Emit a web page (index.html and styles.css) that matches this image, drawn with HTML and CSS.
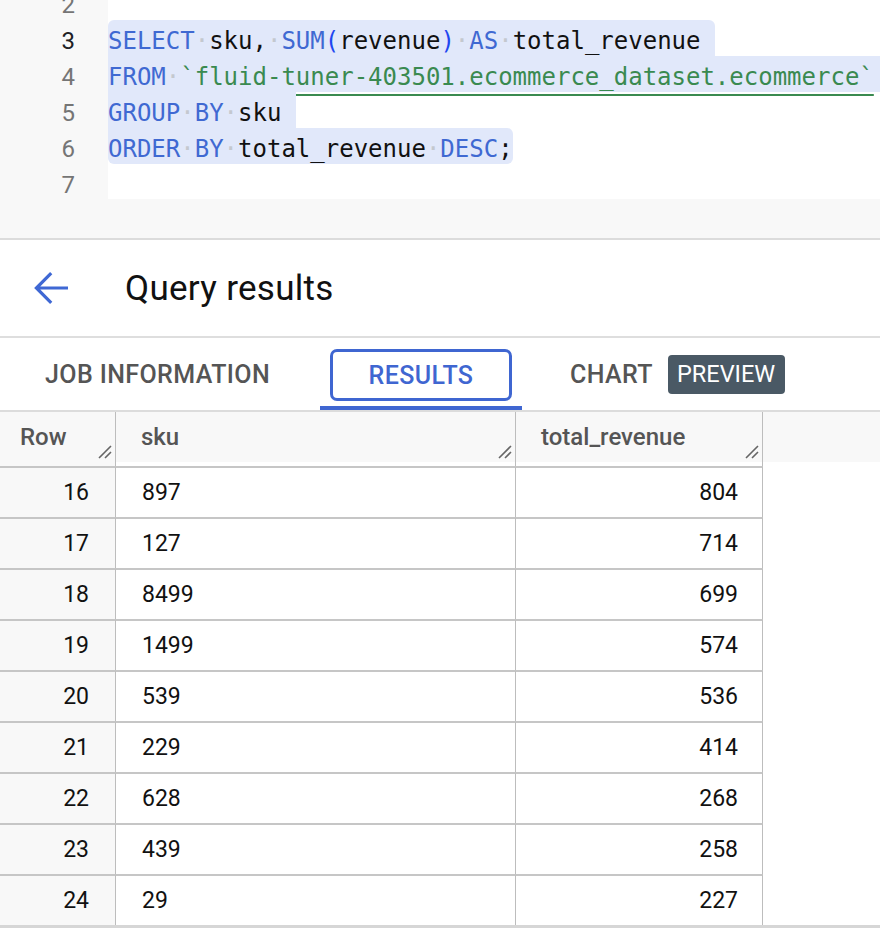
FILE: index.html
```html
<!DOCTYPE html>
<html>
<head>
<meta charset="utf-8">
<link rel="stylesheet" href="styles.css">
</head>
<body>
<div class="editor">
  <div class="gutter">
    <div class="lines">
      <div class="ln">2</div>
      <div class="ln cur">3</div>
      <div class="ln">4</div>
      <div class="ln">5</div>
      <div class="ln">6</div>
      <div class="ln">7</div>
    </div>
  </div>
  <div class="code">
    <div class="lines">
      <div class="line"></div>
      <div class="line"><span class="sel eol r-l1"><span class="kw">SELECT</span><span class="ws">·</span>sku,<span class="ws">·</span><span class="kw">SUM</span><span class="pn">(</span>revenue<span class="pn">)</span><span class="ws">·</span><span class="kw">AS</span><span class="ws">·</span>total_revenue</span></div>
      <div class="line"><span class="sel eol r-l2"><span class="kw">FROM</span><span class="ws">·</span><span class="str">`fluid-tuner-403501.ecommerce_dataset.ecommerce`</span></span></div>
      <div class="line"><span class="sel eol r-l3"><span class="kw">GROUP</span><span class="ws">·</span><span class="kw">BY</span><span class="ws">·</span>sku</span></div>
      <div class="line"><span class="sel r-l4"><span class="kw">ORDER</span><span class="ws">·</span><span class="kw">BY</span><span class="ws">·</span>total_revenue<span class="ws">·</span><span class="kw">DESC</span>;</span></div>
      <div class="line"></div>
    </div>
  </div>
</div>
<div class="editor-foot"></div>

<div class="results-head">
  <svg class="back" width="48" height="48" viewBox="0 0 24 24"><path d="M20 12H4.6M11.6 4.6L4.2 12l7.4 7.4" fill="none" stroke="#3f68d4" stroke-width="1.6"/></svg>
  <div class="title">Query results</div>
</div>

<div class="tabs">
  <div class="tab job">JOB INFORMATION</div>
  <div class="tab active"><div class="tab-box">RESULTS</div></div>
  <div class="tab chart">CHART <span class="badge">PREVIEW</span></div>
</div>

<div class="table">
  <div class="row head">
    <div class="cell c-row">Row<svg class="handle" width="14" height="14" viewBox="0 0 14 14"><path d="M1 13L13 1M7 13l6-6" stroke="#666" stroke-width="1.6"/></svg></div>
    <div class="cell c-sku">sku<svg class="handle" width="14" height="14" viewBox="0 0 14 14"><path d="M1 13L13 1M7 13l6-6" stroke="#666" stroke-width="1.6"/></svg></div>
    <div class="cell c-rev">total_revenue<svg class="handle" width="14" height="14" viewBox="0 0 14 14"><path d="M1 13L13 1M7 13l6-6" stroke="#666" stroke-width="1.6"/></svg></div>
    <div class="cell c-fill"></div>
  </div>
  <div class="row partial">
    <div class="cell c-row"></div>
    <div class="cell c-sku"></div>
    <div class="cell c-rev"></div>
    <div class="cell c-fill"></div>
  </div>
  <div class="row data"><div class="cell c-row">16</div><div class="cell c-sku">897</div><div class="cell c-rev">804</div><div class="cell c-fill"></div></div>
  <div class="row data"><div class="cell c-row">17</div><div class="cell c-sku">127</div><div class="cell c-rev">714</div><div class="cell c-fill"></div></div>
  <div class="row data"><div class="cell c-row">18</div><div class="cell c-sku">8499</div><div class="cell c-rev">699</div><div class="cell c-fill"></div></div>
  <div class="row data"><div class="cell c-row">19</div><div class="cell c-sku">1499</div><div class="cell c-rev">574</div><div class="cell c-fill"></div></div>
  <div class="row data"><div class="cell c-row">20</div><div class="cell c-sku">539</div><div class="cell c-rev">536</div><div class="cell c-fill"></div></div>
  <div class="row data"><div class="cell c-row">21</div><div class="cell c-sku">229</div><div class="cell c-rev">414</div><div class="cell c-fill"></div></div>
  <div class="row data"><div class="cell c-row">22</div><div class="cell c-sku">628</div><div class="cell c-rev">268</div><div class="cell c-fill"></div></div>
  <div class="row data"><div class="cell c-row">23</div><div class="cell c-sku">439</div><div class="cell c-rev">258</div><div class="cell c-fill"></div></div>
  <div class="row data"><div class="cell c-row">24</div><div class="cell c-sku">29</div><div class="cell c-rev">227</div><div class="cell c-fill"></div></div>
  <div class="table-foot"></div>
</div>
</body>
</html>
```

FILE: styles.css
```css
html, body {
  margin: 0;
  padding: 0;
  background: #ffffff;
  font-family: Roboto, "Noto Sans", sans-serif;
  color: #202124;
}

/* ---------- editor ---------- */
.editor {
  display: flex;
  height: 199px;
  overflow: hidden;
}
.gutter {
  width: 108px;
  flex: none;
  background: #f8f8f8;
}
.code {
  flex: 1;
  background: #ffffff;
  overflow: hidden;
}
.lines {
  margin-top: -16px;
}
.ln {
  height: 36px;
  line-height: 42px;
  text-align: right;
  padding-right: 33px;
  font-size: 24px;
  color: #757575;
}
.ln.cur {
  color: #202124;
}
.line {
  height: 36px;
  line-height: 42px;
  white-space: pre;
  font-family: "DejaVu Sans Mono", "Liberation Mono", monospace;
  font-size: 24px;
  color: #111111;
}
.sel {
  display: inline-block;
  height: 36px;
  background: #e1e8fa;
  vertical-align: top;
}
.sel.eol {
  padding-right: 1ch;
}
.r-l1 { border-radius: 6px 6px 0 0; }
.r-l2 { border-radius: 0 6px 6px 0; }
.r-l3 { border-radius: 0 0 0 0; }
.r-l4 { border-radius: 0 6px 6px 6px; }
.kw { color: #3f69d2; }
.pn { color: #1f47f0; }
.ws { color: #c4c8cf; }
.str {
  color: #3a8a50;
  text-decoration: underline;
  text-decoration-color: #3a8a50;
  text-decoration-thickness: 2px;
  text-underline-offset: 9px;
}
.editor-foot {
  height: 39px;
  background: #f8f8f8;
  border-bottom: 2px solid #dcdcdc;
}

/* ---------- header ---------- */
.results-head {
  height: 96px;
  display: flex;
  align-items: center;
  padding-left: 28px;
  border-bottom: 2px solid #dedede;
}
.back {
  flex: none;
}
.title {
  margin-left: 49px;
  font-size: 35px;
  letter-spacing: 0.3px;
  color: #111111;
  font-weight: 400;
}

/* ---------- tabs ---------- */
.tabs {
  height: 72px;
  display: flex;
  padding-left: 45px;
  border-bottom: 2px solid #dcdcdc;
}
.tab {
  display: flex;
  align-items: center;
  font-size: 25px;
  font-weight: 500;
  color: #555555;
  letter-spacing: 0.4px;
}
.tab.job {
  width: 275px;
}
.tab.active {
  width: 202px;
  box-sizing: border-box;
  padding: 0 10px 5px;
  align-items: flex-end;
  border-bottom: 4px solid #3f66d1;
}
.tab-box {
  width: 182px;
  height: 52px;
  box-sizing: border-box;
  border: 3px solid #3f66d1;
  border-radius: 7px;
  display: flex;
  align-items: center;
  justify-content: center;
  color: #3f66d1;
}
.tab.chart {
  padding-left: 48px;
}
.badge {
  margin-left: 15px;
  background: #4a5965;
  color: #ffffff;
  font-weight: 400;
  font-size: 23.5px;
  letter-spacing: 0;
  height: 39px;
  line-height: 39px;
  padding: 0 10px 0 9px;
  border-radius: 4px;
}

/* ---------- table ---------- */
.row {
  display: grid;
  grid-template-columns: 116px 400px 247px 1fr;
}
.cell {
  position: relative;
  box-sizing: border-box;
  font-size: 23px;
  display: flex;
  align-items: center;
}
.c-row, .c-sku, .c-rev {
  border-right: 1px solid #bdbdbd;
}
.c-fill {
  border: none;
}
.head .cell {
  height: 50px;
  background: #f8f8f8;
  font-size: 24px;
  font-weight: 500;
  color: #555555;
}
.head .c-row { padding-left: 20px; }
.head .c-sku { padding-left: 25px; }
.head .c-rev { padding-left: 25px; }
.handle {
  position: absolute;
  right: 3px;
  bottom: 3px;
}
.partial .cell {
  height: 4px;
}
.c-row { background: #f8f8f8; }
.data .cell {
  height: 51px;
  color: #111111;
}
.data .c-row, .data .c-sku, .data .c-rev {
  border-top: 2px solid #c6c6c6;
}
.data .c-row {
  justify-content: flex-end;
  padding-right: 26px;
}
.data .c-sku {
  padding-left: 26px;
}
.data .c-rev {
  justify-content: flex-end;
  padding-right: 24px;
}
.data .c-fill {
  background: #ffffff;
}
.table-foot {
  height: 3px;
  background: #d6d6d6;
}
```
